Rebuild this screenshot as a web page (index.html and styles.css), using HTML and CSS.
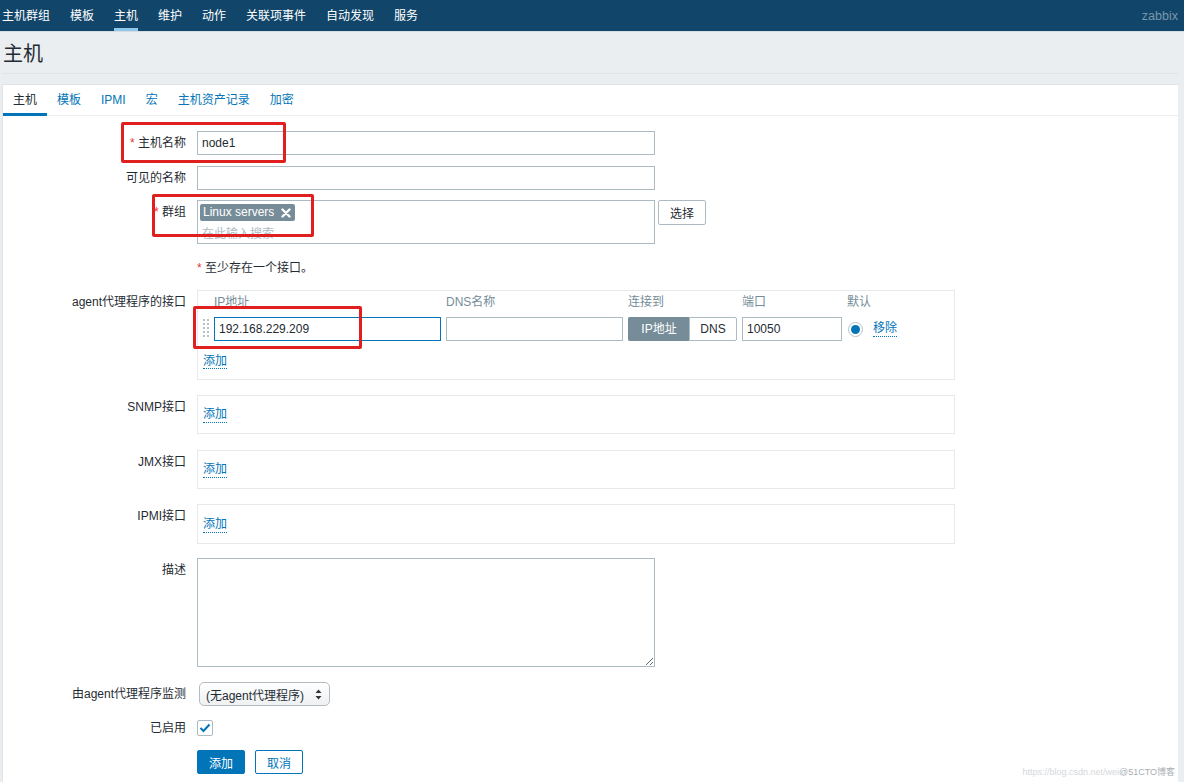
FILE: index.html
```html
<!DOCTYPE html>
<html lang="zh-CN">
<head>
<meta charset="utf-8">
<title>主机</title>
<link rel="stylesheet" href="styles.css">
</head>
<body>
<header class="topnav">
  <nav class="menu">
    <a class="menu-item">主机群组</a>
    <a class="menu-item">模板</a>
    <a class="menu-item is-active">主机</a>
    <a class="menu-item">维护</a>
    <a class="menu-item">动作</a>
    <a class="menu-item">关联项事件</a>
    <a class="menu-item">自动发现</a>
    <a class="menu-item">服务</a>
  </nav>
  <span class="brand">zabbix</span>
</header>

<main class="page">
  <h1 class="title">主机</h1>
  <section class="panel">
    <ul class="tabs">
      <li class="tab is-active">主机</li>
      <li class="tab">模板</li>
      <li class="tab">IPMI</li>
      <li class="tab">宏</li>
      <li class="tab">主机资产记录</li>
      <li class="tab">加密</li>
    </ul>

    <form class="form">
      <div class="row row-first">
        <label class="label"><span class="req">*</span> 主机名称</label>
        <div class="field"><input class="text wide" value="node1"></div>
      </div>
      <div class="row row-second">
        <label class="label">可见的名称</label>
        <div class="field"><input class="text wide" value=""></div>
      </div>
      <div class="row">
        <label class="label"><span class="req">*</span> 群组</label>
        <div class="field field-inline">
          <div class="multiselect">
            <span class="chip">Linux servers
              <svg class="chip-x" width="10" height="10" viewBox="0 0 10 10"><path d="M1.5 1.5L8.5 8.5M8.5 1.5L1.5 8.5" stroke="#fff" stroke-width="2.4" stroke-linecap="round"/></svg>
            </span>
            <div class="placeholder">在此输入搜索</div>
          </div>
          <button type="button" class="btn-alt">选择</button>
        </div>
      </div>
      <div class="row row-msg">
        <span class="label"></span>
        <div class="field msg"><span class="req">*</span> 至少存在一个接口。</div>
      </div>
      <div class="row row-agent">
        <label class="label">agent代理程序的接口</label>
        <div class="field">
          <div class="ifbox">
            <div class="if-grid">
              <span></span>
              <span class="if-head">IP地址</span>
              <span class="if-head">DNS名称</span>
              <span class="if-head">连接到</span>
              <span class="if-head">端口</span>
              <span class="if-head">默认</span>

              <svg class="handle" width="7" height="22" viewBox="0 0 7 22">
                <g fill="#b7c2c8">
                  <rect x="0" y="1" width="2" height="2"/><rect x="4" y="1" width="2" height="2"/>
                  <rect x="0" y="5" width="2" height="2"/><rect x="4" y="5" width="2" height="2"/>
                  <rect x="0" y="9" width="2" height="2"/><rect x="4" y="9" width="2" height="2"/>
                  <rect x="0" y="13" width="2" height="2"/><rect x="4" y="13" width="2" height="2"/>
                  <rect x="0" y="17" width="2" height="2"/><rect x="4" y="17" width="2" height="2"/>
                </g>
              </svg>
              <input class="text focus" value="192.168.229.209">
              <input class="text" value="">
              <div class="toggle">
                <span class="toggle-opt is-on">IP地址</span>
                <span class="toggle-opt">DNS</span>
              </div>
              <input class="text" value="10050">
              <div class="default-cell">
                <span class="radio"><span class="radio-dot"></span></span>
                <a class="link">移除</a>
              </div>
            </div>
            <div class="if-add"><a class="link">添加</a></div>
          </div>
        </div>
      </div>
      <div class="row row-snmp">
        <label class="label">SNMP接口</label>
        <div class="field"><div class="ifbox-empty"><a class="link">添加</a></div></div>
      </div>
      <div class="row row-jmx">
        <label class="label">JMX接口</label>
        <div class="field"><div class="ifbox-empty"><a class="link">添加</a></div></div>
      </div>
      <div class="row row-ipmi">
        <label class="label">IPMI接口</label>
        <div class="field"><div class="ifbox-empty"><a class="link">添加</a></div></div>
      </div>
      <div class="row row-desc">
        <label class="label">描述</label>
        <div class="field"><textarea class="area"></textarea></div>
      </div>
      <div class="row row-select">
        <label class="label">由agent代理程序监测</label>
        <div class="field">
          <div class="select">(无agent代理程序)
            <svg class="select-arrows" width="7" height="11" viewBox="0 0 7 11"><path d="M3.5 0.5L6.5 4H0.5Z M3.5 10.5L6.5 7H0.5Z" fill="#333"/></svg>
          </div>
        </div>
      </div>
      <div class="row row-check">
        <label class="label">已启用</label>
        <div class="field field-center">
          <span class="checkbox">
            <svg width="12" height="10" viewBox="0 0 12 10"><path d="M1.5 5L4.5 8L10.5 1.5" fill="none" stroke="#0275b8" stroke-width="2"/></svg>
          </span>
        </div>
      </div>
      <div class="row row-buttons">
        <span class="label"></span>
        <div class="field field-buttons">
          <button type="button" class="btn-main">添加</button>
          <button type="button" class="btn-cancel">取消</button>
        </div>
      </div>
    </form>
  </section>
</main>

<div class="mark mark-1"></div>
<div class="mark mark-2"></div>
<div class="mark mark-3"></div>
<div class="watermark"><span class="wm-url">https://blog.csdn.net/wei</span><span class="wm-site">@51CTO博客</span></div>
</body>
</html>
```

FILE: styles.css
```css
* { box-sizing: border-box; }

html, body {
  margin: 0;
  padding: 0;
}

body {
  width: 1184px;
  height: 782px;
  overflow: hidden;
  background: #ebeef0;
  font-family: "Liberation Sans", "Noto Sans CJK SC", Arial, sans-serif;
  font-size: 12px;
  color: #1f2c33;
  position: relative;
}

/* top navigation */
.topnav {
  height: 32px;
  background: #11466a;
  border-bottom: 1px solid #d6dde2;
  display: flex;
  align-items: flex-start;
  justify-content: space-between;
  padding: 0 6px 0 2px;
}
.menu {
  display: flex;
  gap: 20px;
  height: 31px;
}
.menu-item {
  color: #ffffff;
  line-height: 31px;
  padding-top: 1px;
  height: 31px;
  font-size: 12px;
  position: relative;
}
.menu-item.is-active::after {
  content: "";
  position: absolute;
  left: 0;
  right: 0;
  bottom: 0;
  height: 3px;
  background: #8ec8ee;
}
.brand {
  color: #7b97ab;
  font-size: 12.5px;
  line-height: 32px;
}

/* page */
.page {
  padding: 0 6px 0 2px;
}
.title {
  margin: 0;
  padding: 10px 0 0 1px;
  font-size: 20px;
  line-height: 24px;
  font-weight: 400;
  height: 42px;
  border-bottom: 1px solid #dfe4e7;
}

.panel {
  margin-top: 10px;
  background: #ffffff;
  border: 1px solid #dfe4e7;
  border-right: none;
  height: 720px;
}

/* tabs */
.tabs {
  list-style: none;
  margin: 0;
  padding: 0;
  display: flex;
  height: 31px;
  border-bottom: 1px solid #ebeef0;
}
.tab {
  padding: 3px 10px 0;
  line-height: 25px;
  height: 31px;
  color: #0275b8;
  border-bottom: 3px solid transparent;
}
.tab.is-active {
  color: #1f2c33;
  border-bottom-color: #0275b8;
}

/* form */
.form {
  display: flex;
  flex-direction: column;
  gap: 10px;
  padding-top: 15px;
}
.row {
  display: grid;
  grid-template-columns: 183px 1fr;
  column-gap: 11px;
  align-items: start;
}
.row-second { margin-top: 1px; }
.label {
  text-align: right;
  line-height: 24px;
  white-space: nowrap;
}
.req {
  color: #e33734;
}
.field {
  min-height: 24px;
}
.field-inline {
  display: flex;
  gap: 3px;
  align-items: flex-start;
}

.text {
  height: 24px;
  border: 1px solid #acbbc2;
  background: #ffffff;
  padding: 0 4px;
  font-family: inherit;
  font-size: 12px;
  color: #1f2c33;
  outline: none;
  margin: 0;
  width: 100%;
  border-radius: 0;
}
.text.wide {
  width: 458px;
}
.text.focus {
  border-color: #0275b8;
}

.multiselect {
  width: 458px;
  height: 44px;
  border: 1px solid #acbbc2;
  padding: 3px 2px;
}
.chip {
  display: inline-flex;
  align-items: center;
  gap: 7px;
  height: 17px;
  padding: 0 4px 0 3px;
  background: #768d99;
  color: #ffffff;
  border-radius: 2px;
  font-size: 12px;
  line-height: 17px;
}
.chip-x {
  display: block;
}
.placeholder {
  color: #acbbc2;
  line-height: 16px;
  margin-top: 5px;
  padding-left: 2px;
}
.btn-alt {
  height: 25px;
  width: 48px;
  border: 1px solid #acbbc2;
  border-radius: 2px;
  background: #ffffff;
  font-family: inherit;
  font-size: 12px;
  color: #1f2c33;
  padding: 0;
}

.msg {
  line-height: 24px;
}
.row-msg { margin-top: 2px; }
.row-agent { margin-top: 0; }

/* interface box */
.ifbox {
  width: 758px;
  height: 90px;
  border: 1px solid #e6eaec;
  padding: 0 5px;
}
.if-grid {
  display: grid;
  grid-template-columns: 6px 227px 177px 109px 100px auto;
  column-gap: 5px;
  row-gap: 3px;
  align-items: center;
}
.if-head {
  color: #768d99;
  line-height: 23px;
}
.handle {
  display: block;
}
.toggle {
  display: flex;
  height: 24px;
}
.toggle-opt {
  flex: 1 1 auto;
  text-align: center;
  line-height: 22px;
  border: 1px solid #acbbc2;
  color: #1f2c33;
  background: #ffffff;
}
.toggle-opt:first-child {
  width: 61px;
  flex: none;
  border-radius: 2px 0 0 2px;
  border-right: none;
}
.toggle-opt:last-child {
  border-radius: 0 2px 2px 0;
}
.toggle-opt.is-on {
  background: #768d99;
  border-color: #768d99;
  color: #ffffff;
}
.default-cell {
  display: flex;
  align-items: center;
  gap: 10px;
  padding-left: 1px;
}
.radio {
  width: 15px;
  height: 15px;
  border: 1px solid #b7c2c8;
  border-radius: 50%;
  display: flex;
  align-items: center;
  justify-content: center;
  background: #ffffff;
}
.radio-dot {
  width: 9px;
  height: 9px;
  border-radius: 50%;
  background: #0275b8;
}
.link {
  color: #0275b8;
  border-bottom: 1px dotted #0275b8;
  line-height: 15px;
  cursor: pointer;
}
.if-add {
  margin-top: 11px;
  line-height: 18px;
}

.ifbox-empty {
  width: 758px;
  height: 39px;
  border: 1px solid #e6eaec;
  padding: 1px 5px 0;
  display: flex;
  align-items: center;
}
.row-snmp { margin-top: 5px; }
.row-jmx { margin-top: 6px; }
.row-ipmi { margin-top: 5px; }
.row-ipmi .ifbox-empty { height: 40px; }
.row-desc { margin-top: 4px; }

.area {
  display: block;
  width: 458px;
  height: 109px;
  border: 1px solid #acbbc2;
  margin: 0;
  padding: 4px;
  font-family: inherit;
  font-size: 12px;
  border-radius: 0;
  outline: none;
}

.row-select { margin-top: 5px; }
.select {
  margin-left: 2px;
  width: 131px;
  height: 24px;
  border: 1px solid #b5bbc0;
  border-radius: 5px;
  background: linear-gradient(#ffffff, #eef0f2);
  display: flex;
  align-items: center;
  justify-content: space-between;
  padding: 0 7px 0 6px;
  color: #1f2c33;
  font-size: 12px;
}
.select-arrows {
  display: block;
}

.row-check { margin-top: 0; }
.field-center {
  display: flex;
  align-items: center;
  height: 24px;
}
.checkbox {
  width: 16px;
  height: 16px;
  border: 1px solid #acbbc2;
  border-radius: 2px;
  display: flex;
  align-items: center;
  justify-content: center;
  background: #ffffff;
}

.field-buttons {
  display: flex;
  gap: 10px;
}
.btn-main,
.btn-cancel {
  height: 24px;
  width: 48px;
  border-radius: 2px;
  font-family: inherit;
  font-size: 12px;
  padding: 0;
}
.btn-main {
  background: #0275b8;
  border: 1px solid #0275b8;
  color: #ffffff;
}
.btn-cancel {
  background: #ffffff;
  border: 1px solid #0275b8;
  color: #0275b8;
}

/* red annotation boxes drawn over the screenshot */
.mark {
  position: absolute;
  border: 3px solid #e0201f;
  border-radius: 2px;
  pointer-events: none;
}
.mark-1 { left: 121px; top: 122px; width: 165px; height: 41px; }
.mark-2 { left: 152px; top: 194px; width: 162px; height: 43px; }
.mark-3 { left: 193px; top: 306px; width: 169px; height: 43px; }

.watermark {
  position: absolute;
  right: 9px;
  bottom: 4px;
  font-size: 9px;
  white-space: nowrap;
}
.wm-url { color: #d4d8db; }
.wm-site { color: #a9aeb2; }
```
